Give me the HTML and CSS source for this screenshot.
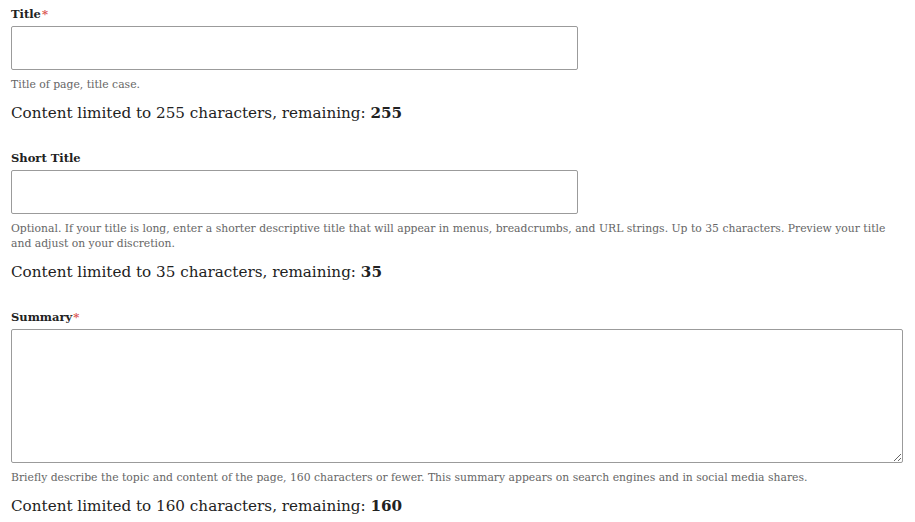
FILE: index.html
```html
<!DOCTYPE html>
<html lang="en">
<head>
<meta charset="utf-8">
<title>Page form</title>
<link rel="stylesheet" href="styles.css">
</head>
<body>
<form class="form">
  <div class="field">
    <label class="label" for="title">Title<span class="req">*</span></label>
    <input class="input" id="title" type="text">
    <div class="desc">Title of page, title case.</div>
    <div class="counter">Content limited to 255 characters, remaining: <strong>255</strong></div>
  </div>
  <div class="field">
    <label class="label" for="short">Short Title</label>
    <input class="input" id="short" type="text">
    <div class="desc">Optional. If your title is long, enter a shorter descriptive title that will appear in menus, breadcrumbs, and URL strings. Up to 35 characters. Preview your title and adjust on your discretion.</div>
    <div class="counter">Content limited to 35 characters, remaining: <strong>35</strong></div>
  </div>
  <div class="field">
    <label class="label" for="summary">Summary<span class="req">*</span></label>
    <textarea class="textarea" id="summary"></textarea>
    <div class="desc">Briefly describe the topic and content of the page, 160 characters or fewer. This summary appears on search engines and in social media shares.</div>
    <div class="counter">Content limited to 160 characters, remaining: <strong>160</strong></div>
  </div>
</form>
</body>
</html>
```

FILE: styles.css
```css
html, body {
  margin: 0;
  padding: 0;
  background: #fff;
}
body {
  font-family: "DejaVu Serif", "Liberation Serif", serif;
  color: #222;
}
.form {
  padding: 5px 12px 0 11px;
  display: flex;
  flex-direction: column;
  gap: 25px;
}
.field {
  display: flex;
  flex-direction: column;
  align-items: flex-start;
}
.label {
  display: block;
  height: 18px;
  font-size: 11.5px;
  line-height: 18px;
  font-weight: bold;
  color: #222;
  margin-bottom: 3px;
}
.req {
  color: #d9534f;
  margin-left: 1px;
  font-weight: bold;
}
.input, .textarea {
  display: block;
  box-sizing: border-box;
  border: 1px solid #9b9b9b;
  border-radius: 2px;
  background: #fff;
  margin: 0;
  font: inherit;
}
.input {
  width: 567px;
  height: 44px;
}
.textarea {
  width: 100%;
  height: 134px;
  resize: vertical;
}
.desc {
  font-size: 10.8px;
  line-height: 15px;
  color: #666;
  margin-top: 7px;
}
.counter {
  height: 22px;
  font-size: 15.2px;
  line-height: 22px;
  color: #222;
  margin-top: 10px;
}
.counter strong {
  font-weight: bold;
}
```
